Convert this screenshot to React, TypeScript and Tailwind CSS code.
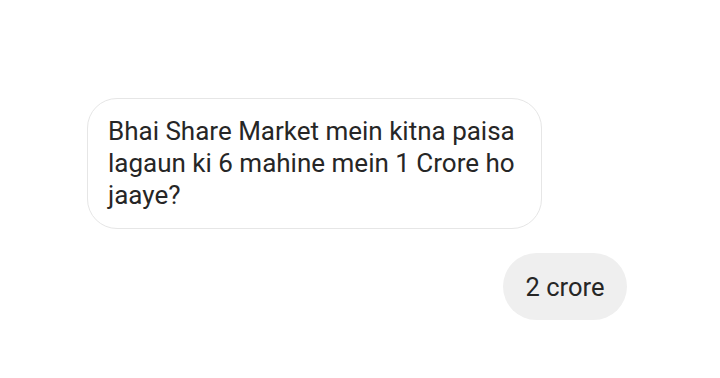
import React from "react";

export default function App() {
  return (
    <div
      className="w-[720px] h-[378px] bg-white flex flex-col pt-[98px] pl-[87px] pr-[93px] text-[#262626]"
      style={{ fontFamily: "Roboto, 'Noto Sans', sans-serif" }}
    >
      <div className="self-start w-[455px] border border-[#e6e6e6] rounded-[30px] pl-[20px] pr-[10px] pt-[16px] pb-[17px] text-[26px] leading-[32px]">
        Bhai Share Market mein kitna paisa lagaun ki 6 mahine mein 1 Crore ho jaaye?
      </div>
      <div className="self-end mt-[24px] h-[67px] w-[124px] bg-[#efefef] rounded-full flex items-center justify-center text-[25.5px] leading-[32px]">
        2 crore
      </div>
    </div>
  );
}
